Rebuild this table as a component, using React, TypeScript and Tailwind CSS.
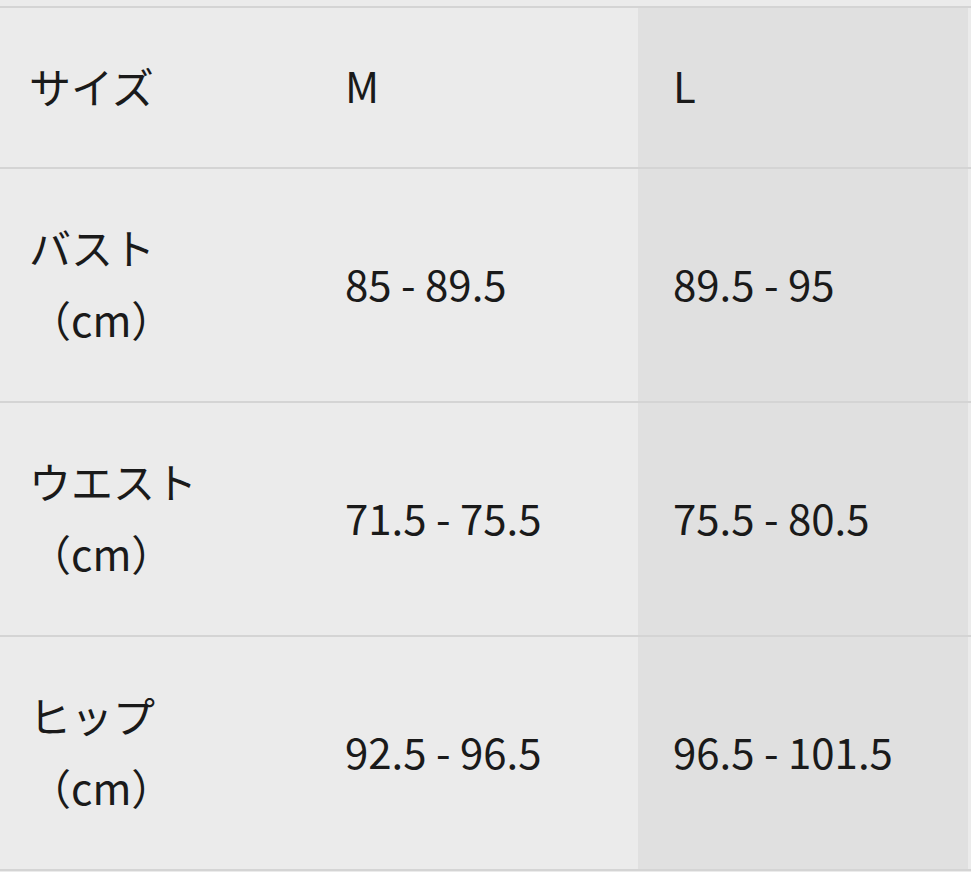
const rows = [
  { label: ['バスト', '（cm）'], m: '85 - 89.5', l: '89.5 - 95' },
  { label: ['ウエスト', '（cm）'], m: '71.5 - 75.5', l: '75.5 - 80.5' },
  { label: ['ヒップ', '（cm）'], m: '92.5 - 96.5', l: '96.5 - 101.5' },
]

function Row({ label, m, l, header }: { label: string[]; m: string; l: string; header?: boolean }) {
  return (
    <div className={`flex border-b-2 border-[#d4d4d4] ${header ? 'h-[161px]' : 'h-[234px]'}`}>
      <div className="w-[313px] pl-[29px] pb-[4px] flex flex-col justify-center leading-[72px]">
        {label.map((t) => (
          <div key={t}>{t}</div>
        ))}
      </div>
      <div className="w-[325px] pl-[32px] pb-[6px] flex items-center">{m}</div>
      <div className="w-[330px] pl-[35px] pb-[6px] flex items-center bg-[#e0e0e0]">{l}</div>
    </div>
  )
}

export default function App() {
  return (
    <div
      className="w-[971px] h-[872px] bg-[#ebebeb] pt-[6px] text-[#1a1a1a] text-[42px] overflow-hidden"
      style={{ fontFamily: '"Noto Sans CJK JP", "Noto Sans", sans-serif' }}
    >
      <div className="border-t-2 border-[#d4d4d4]">
        <Row header label={['サイズ']} m="M" l="L" />
        {rows.map((r) => (
          <Row key={r.m} label={r.label} m={r.m} l={r.l} />
        ))}
      </div>
    </div>
  )
}
